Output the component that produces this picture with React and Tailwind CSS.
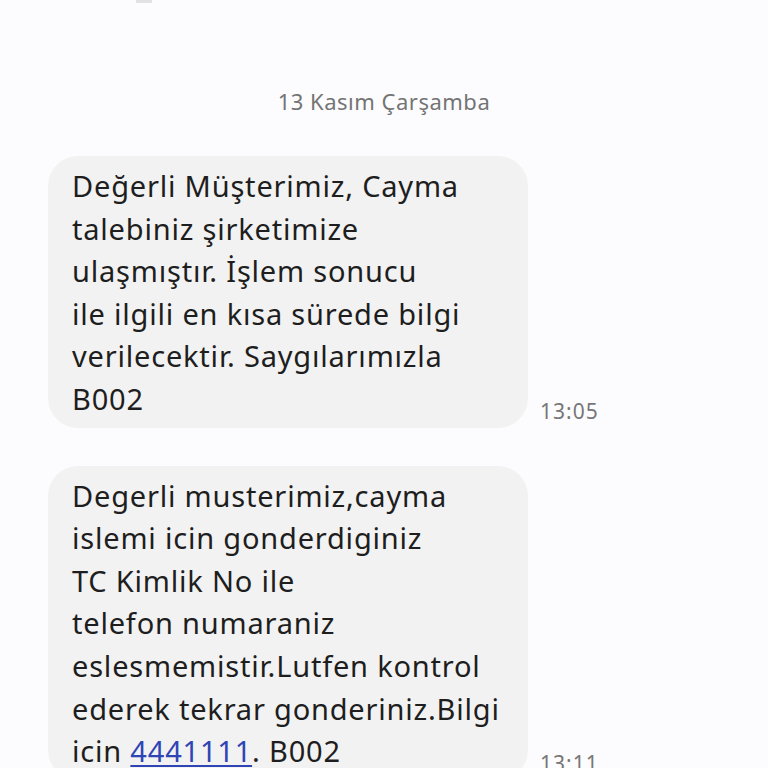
import React from 'react';

const messages = [
  {
    time: '13:05',
    lines: [
      'Değerli Müşterimiz, Cayma',
      'talebiniz şirketimize',
      'ulaşmıştır. İşlem sonucu',
      'ile ilgili en kısa sürede bilgi',
      'verilecektir. Saygılarımızla',
      'B002',
    ],
  },
  {
    time: '13:11',
    lines: [
      'Degerli musterimiz,cayma',
      'islemi icin gonderdiginiz',
      'TC Kimlik No ile',
      'telefon numaraniz',
      'eslesmemistir.Lutfen kontrol',
      'ederek tekrar gonderiniz.Bilgi',
      'LINK',
    ],
  },
];

const Bubble = ({ lines, time }) => (
  <div className="flex items-end gap-3">
    <div className="w-[480px] rounded-[30px] bg-[#f2f2f2] px-6 pt-[9px] pb-[7px] text-[29px] leading-[42.6px] tracking-[0.8px] text-[#1e1e1e]">
      {lines.map((line) =>
        line === 'LINK' ? (
          <div key={line}>
            icin <span className="text-[#2f45b5] underline underline-offset-[3px]">4441111</span>. B002
          </div>
        ) : (
          <div key={line}>{line}</div>
        )
      )}
    </div>
    <span className="mb-0 text-[21px] tracking-[1px] text-[#777777]">{time}</span>
  </div>
);

export default function App() {
  return (
    <div className="h-[768px] overflow-hidden bg-[#fcfcfe] font-['Noto_Sans',sans-serif]">
      <div className="ml-[136px] h-[3px] w-[16px] bg-[#e2e2e4]" />
      <div className="pt-[82px] text-center text-[22px] tracking-[0.5px] text-[#747474]">13 Kasım Çarşamba</div>
      <div className="mt-[38px] flex flex-col gap-[38px] pl-12">
        {messages.map((m) => (
          <Bubble key={m.time} lines={m.lines} time={m.time} />
        ))}
      </div>
    </div>
  );
}
